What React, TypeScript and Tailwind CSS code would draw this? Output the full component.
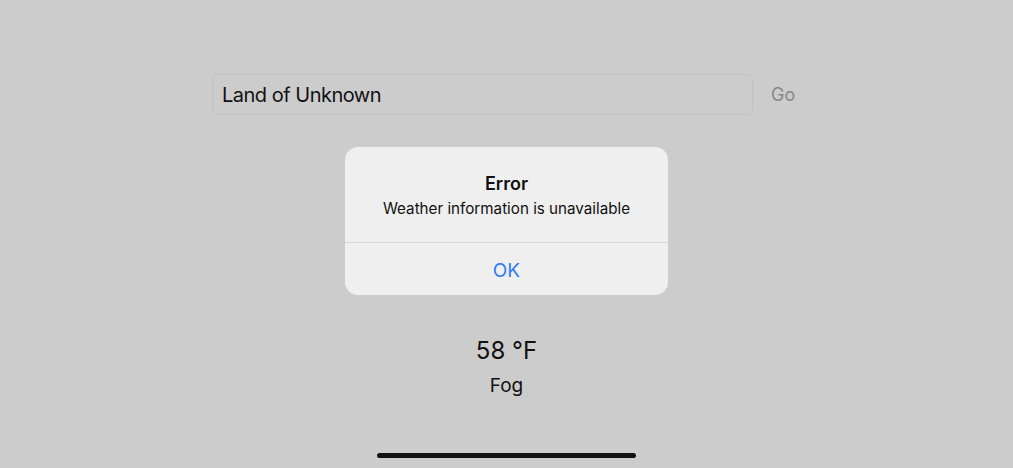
const App = () => {
  return (
    <main
      className="relative w-[1013px] h-[468px] overflow-hidden bg-[#cccccc] text-black"
      style={{ fontFamily: "Inter, 'Noto Sans', sans-serif" }}
    >
      <div className="flex items-center pt-[74px] pl-[212px] gap-[18px]">
        <div className="flex items-center w-[541px] h-[41px] px-[9px] rounded-[6px] border border-[#c2c2c2] bg-[#cccccc]">
          <span className="text-[20px] tracking-[-0.5px] text-[#111]">Land of Unknown</span>
        </div>
        <span className="text-[18px] text-[#878787]">Go</span>
      </div>

      <div className="flex flex-col items-center mt-[221px]">
        <span className="text-[24px] leading-[30px] text-[#111]">58 °F</span>
        <span className="text-[19px] leading-[24px] mt-[8px] text-[#111]">Fog</span>
      </div>

      <div className="absolute left-[345px] top-[147px] w-[323px] h-[148px] rounded-[13px] bg-[#efefef] flex flex-col overflow-hidden">
        <div className="flex flex-col items-center pt-[24px] h-[95px]">
          <span className="text-[18px] leading-[26px] font-semibold text-[#111]">Error</span>
          <span className="text-[15.2px] leading-[20px] mt-[2px] text-[#111]">Weather information is unavailable</span>
        </div>
        <div className="h-px bg-[#d6d6d6]" />
        <div className="flex flex-1 items-center justify-center pt-[4px]">
          <span className="text-[19px] text-[#2f7cf6]">OK</span>
        </div>
      </div>

      <div className="absolute left-[377px] top-[453px] w-[259px] h-[5px] rounded-full bg-[#111]" />
    </main>
  );
};

export default App;
